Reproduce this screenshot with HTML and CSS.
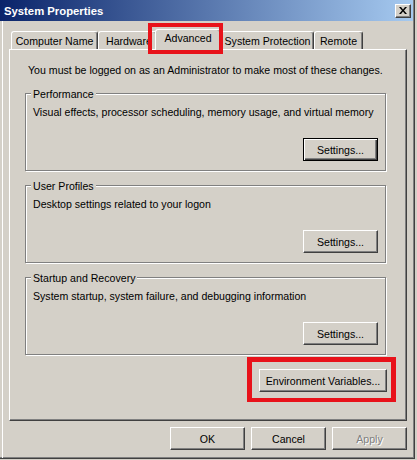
FILE: index.html
```html
<!DOCTYPE html>
<html lang="en">
<head>
    <meta charset="UTF-8">
    <title>System Properties</title>
    <link rel="stylesheet" href="styles.css">
</head>
<body>

    <div class="window">
        <div class="titlebar">
            <span class="title">System Properties</span>
            <button class="close" aria-label="Close">
                <svg width="8" height="7" viewBox="0 0 8 7"><path d="M0 0h2l2 2.5 2-2.5h2l-3 3.5 3 3.5h-2l-2-2.5-2 2.5h-2l3-3.5z" fill="#000"/></svg>
            </button>
        </div>

        <div class="frame">
            <div class="tabs">
                <div class="tab tab-name">Computer Name</div>
                <div class="tab tab-hw">Hardware</div>
                <div class="tab tab-adv selected">Advanced<span class="mark mark-tab"></span></div>
                <div class="tab tab-sp">System Protection</div>
                <div class="tab tab-remote">Remote</div>
            </div>

            <div class="panel">
                <p class="intro">You must be logged on as an Administrator to make most of these changes.</p>

                <div class="groups">
                    <div class="group">
                        <span class="group-label">Performance</span>
                        <p class="group-text">Visual effects, processor scheduling, memory usage, and virtual memory</p>
                        <button class="btn btn-default">Settings...</button>
                    </div>

                    <div class="group">
                        <span class="group-label">User Profiles</span>
                        <p class="group-text">Desktop settings related to your logon</p>
                        <button class="btn">Settings...</button>
                    </div>

                    <div class="group">
                        <span class="group-label">Startup and Recovery</span>
                        <p class="group-text">System startup, system failure, and debugging information</p>
                        <button class="btn">Settings...</button>
                    </div>

                    <div class="env-wrap">
                        <button class="btn btn-env">Environment Variables...</button>
                        <span class="mark mark-env"></span>
                    </div>
                </div>
            </div>

            <div class="actions">
                <button class="btn">OK</button>
                <button class="btn">Cancel</button>
                <button class="btn disabled">Apply</button>
            </div>
        </div>
    </div>

</body>
</html>
```

FILE: styles.css
```css
* { box-sizing: border-box; margin: 0; padding: 0; }
body { background: #d4d0c8; font-family: "Liberation Sans", Arial, sans-serif; font-size: 10.6px; color: #000; width: 417px; height: 460px; overflow: hidden; }

.window { width: 415px; height: 459px; background: #d4d0c8; border-right: 1px solid #404040; border-bottom: 1px solid #404040; padding: 0 1px 1px 0; box-shadow: inset -1px -1px #808080; }

.titlebar { height: 21px; display: flex; align-items: center; justify-content: space-between; background: linear-gradient(to right, #0a246a, #a6caf0); }
.title { color: #fff; font-weight: bold; font-size: 11.3px; padding-left: 4px; }
.close { width: 16px; height: 14px; margin-right: 2px; display: flex; align-items: center; justify-content: center; background: #d4d0c8; border: 1px solid; border-color: #fff #404040 #404040 #fff; box-shadow: inset -1px -1px #808080; }

.frame { margin-left: 2px; border-left: 1px solid #fff; height: 437px; }

.tabs { display: flex; align-items: flex-end; height: 28px; padding-left: 8px; }
.tab { height: 18px; padding: 3px 0 0 0; line-height: 13px; text-align: center; white-space: nowrap; overflow: hidden; border: 1px solid; border-bottom: none; border-color: #fff #404040 transparent #fff; border-radius: 3px 3px 0 0; box-shadow: inset -1px 0 #808080; }
.tab-name { width: 87px; }
.tab-hw { width: 59px; text-align: left; padding-left: 7px; }
.tab-adv { width: 66px; }
.tab-sp { width: 93px; }
.tab-remote { width: 49px; }
.selected { position: relative; z-index: 1; height: 21px; margin: 0 0 -1px -2px; padding-top: 2px; background: #d4d0c8; overflow: visible; }

.mark { position: absolute; border: 4px solid #e8121a; pointer-events: none; }
.mark-tab { left: -8px; top: -7px; width: 75px; height: 31px; }
.mark-env { left: -12px; top: -12px; width: 149px; height: 45px; border-width: 5px 5px 4px 5px; }

.panel { margin-left: 6px; width: 398px; height: 372px; border: 1px solid; border-color: #fff #404040 #404040 #fff; box-shadow: inset -1px -1px #808080; }
.intro { margin: 14px 0 0 18px; line-height: 13px; white-space: nowrap; }

.groups { margin: 16px 0 0 15px; width: 361px; display: flex; flex-direction: column; }
.group { position: relative; height: 78px; margin-bottom: 14px; padding: 12px 7px 9px 7px; display: flex; flex-direction: column; border: 1px solid #808080; box-shadow: inset 1px 1px #fff, 1px 1px #fff; }
.group-label { position: absolute; top: -6px; left: 5px; padding: 0 2px; line-height: 13px; background: #d4d0c8; }
.group-text { line-height: 13px; white-space: nowrap; }
.group .btn { margin-top: auto; align-self: flex-end; }

.btn { width: 75px; height: 23px; font-family: inherit; font-size: 10.6px; color: #000; background: #d4d0c8; border: 1px solid; border-color: #fff #404040 #404040 #fff; box-shadow: inset -1px -1px #808080; }
.btn-default { border-color: #000; box-shadow: inset 1px 1px #fff, inset -1px -1px #404040, inset -2px -2px #808080; }
.btn-env { width: 128px; }
.disabled { color: #808080; text-shadow: 1px 1px #fff; }

.env-wrap { position: relative; align-self: flex-end; margin-right: -1px; }
.env-wrap .btn { display: block; }

.actions { display: flex; justify-content: flex-end; gap: 6px; margin-left: 6px; width: 398px; padding-top: 6px; }
```
